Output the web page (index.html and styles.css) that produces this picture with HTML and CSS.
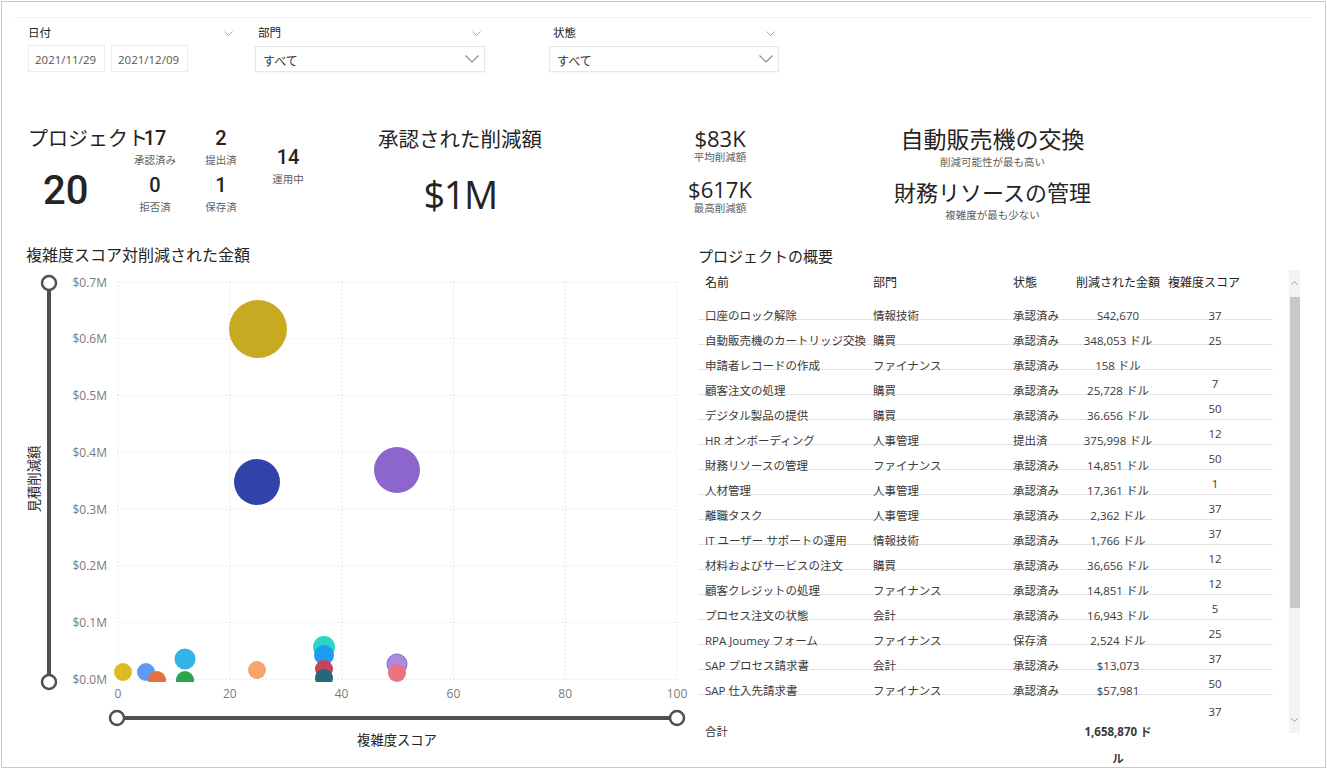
FILE: index.html
```html
<!DOCTYPE html>
<html lang="ja">
<head>
<meta charset="utf-8">
<title>プロジェクト ダッシュボード</title>
<link rel="stylesheet" href="styles.css">
</head>
<body>
<div class="frame">
  <div class="slicers">
    <div class="slicer s-date">
      <div class="s-head"><span>日付</span><svg class="chev-s" width="9" height="5" viewBox="0 0 9 5"><path d="M0.5 0.5 L4.5 4.5 L8.5 0.5" /></svg></div>
      <div class="dates"><div class="date">2021/11/29</div><div class="date">2021/12/09</div></div>
    </div>
    <div class="slicer s-dept">
      <div class="s-head"><span>部門</span><svg class="chev-s" width="9" height="5" viewBox="0 0 9 5"><path d="M0.5 0.5 L4.5 4.5 L8.5 0.5" /></svg></div>
      <div class="dropdown"><span>すべて</span><svg class="chev-l" width="14" height="8" viewBox="0 0 14 8"><path d="M0.5 0.5 L7 7 L13.5 0.5" /></svg></div>
    </div>
    <div class="slicer s-state">
      <div class="s-head"><span>状態</span><svg class="chev-s" width="9" height="5" viewBox="0 0 9 5"><path d="M0.5 0.5 L4.5 4.5 L8.5 0.5" /></svg></div>
      <div class="dropdown"><span>すべて</span><svg class="chev-l" width="14" height="8" viewBox="0 0 14 8"><path d="M0.5 0.5 L7 7 L13.5 0.5" /></svg></div>
    </div>
  </div>

  <div class="kpis">
    <div class="proj">
      <div class="proj-main">
        <div class="proj-title">プロジェクト</div>
        <div class="big20">20</div>
      </div>
      <div class="stats">
        <div class="stat"><div class="num">17</div><div class="lbl">承認済み</div></div>
        <div class="stat"><div class="num">2</div><div class="lbl">提出済</div></div>
        <div class="stat"><div class="num">0</div><div class="lbl">拒否済</div></div>
        <div class="stat"><div class="num">1</div><div class="lbl">保存済</div></div>
      </div>
      <div class="stat stat14"><div class="num">14</div><div class="lbl">運用中</div></div>
    </div>
    <div class="approved">
      <div class="ap-title">承認された削減額</div>
      <div class="ap-value">$1M</div>
    </div>
    <div class="avg">
      <div class="av-num">$83K</div>
      <div class="lbl">平均削減額</div>
      <div class="av-num second">$617K</div>
      <div class="lbl">最高削減額</div>
    </div>
    <div class="hl">
      <div class="hl-t1">自動販売機の交換</div>
      <div class="lbl hl-l">削減可能性が最も高い</div>
      <div class="hl-t2">財務リソースの管理</div>
      <div class="lbl hl-l">複雑度が最も少ない</div>
    </div>
  </div>

  <div class="bottom">
    <div class="chart">
      <div class="chart-title">複雑度スコア対削減された金額</div>
      <svg class="plot" width="675" height="490" viewBox="0 0 675 490">
        <defs><clipPath id="pc"><rect x="95" y="0" width="580" height="416"/></clipPath></defs>
        <g class="grid">
          <line x1="103" y1="16" x2="662" y2="16"/>
          <line x1="103" y1="72.8" x2="662" y2="72.8"/>
          <line x1="103" y1="129.5" x2="662" y2="129.5"/>
          <line x1="103" y1="186.3" x2="662" y2="186.3"/>
          <line x1="103" y1="243.1" x2="662" y2="243.1"/>
          <line x1="103" y1="299.9" x2="662" y2="299.9"/>
          <line x1="103" y1="356.6" x2="662" y2="356.6"/>
          <line x1="103" y1="413.4" x2="662" y2="413.4"/>
          <line x1="103" y1="16" x2="103" y2="414"/>
          <line x1="214.8" y1="16" x2="214.8" y2="414"/>
          <line x1="326.6" y1="16" x2="326.6" y2="414"/>
          <line x1="438.4" y1="16" x2="438.4" y2="414"/>
          <line x1="550.2" y1="16" x2="550.2" y2="414"/>
          <line x1="662" y1="16" x2="662" y2="414"/>
        </g>
        <g class="ylab">
          <text x="92" y="16">$0.7M</text>
          <text x="92" y="72.8">$0.6M</text>
          <text x="92" y="129.5">$0.5M</text>
          <text x="92" y="186.3">$0.4M</text>
          <text x="92" y="243.1">$0.3M</text>
          <text x="92" y="299.9">$0.2M</text>
          <text x="92" y="356.6">$0.1M</text>
          <text x="92" y="413.4">$0.0M</text>
        </g>
        <g class="xlab">
          <text x="103" y="427">0</text>
          <text x="214.8" y="427">20</text>
          <text x="326.6" y="427">40</text>
          <text x="438.4" y="427">60</text>
          <text x="550.2" y="427">80</text>
          <text x="662" y="427">100</text>
        </g>
        <g clip-path="url(#pc)">
          <circle cx="243" cy="63" r="29" fill="#c8aa22"/>
          <circle cx="242" cy="216" r="23" fill="#3142a8"/>
          <circle cx="382" cy="204" r="23" fill="#8d66cd"/>
          <circle cx="108" cy="406" r="9" fill="#dcbb22"/>
          <circle cx="131" cy="406" r="9" fill="#5c9cf4"/>
          <circle cx="142" cy="414" r="9" fill="#e5703f"/>
          <circle cx="170" cy="414" r="9" fill="#2aa54e"/>
          <circle cx="170" cy="393" r="10.5" fill="#33b3e6"/>
          <circle cx="242" cy="404" r="9" fill="#f7a56b"/>
          <circle cx="309" cy="381" r="11" fill="#2dd5c2"/>
          <circle cx="309" cy="389" r="10" fill="#1f9cf1"/>
          <circle cx="309" cy="403" r="9" fill="#c94356"/>
          <circle cx="309" cy="412" r="9" fill="#24687c"/>
          <circle cx="382" cy="398" r="10" fill="#ab8ce3" stroke="#8a63c4" stroke-width="1"/>
          <circle cx="382" cy="407" r="9" fill="#e9737f"/>
        </g>
        <g class="slider">
          <line x1="34" y1="17" x2="34" y2="416"/>
          <circle cx="34" cy="17" r="7"/>
          <circle cx="34" cy="416" r="7"/>
          <line x1="102" y1="452" x2="662" y2="452"/>
          <circle cx="102" cy="452" r="7"/>
          <circle cx="662" cy="452" r="7"/>
        </g>
        <text class="axis-title" x="382" y="474">複雑度スコア</text>
        <text class="axis-title" transform="translate(19,213) rotate(-90)">見積削減額</text>
      </svg>
    </div>

    <div class="table-sec">
      <div class="table-title">プロジェクトの概要</div>
      <div class="tbl-wrap">
        <div class="tbl">
          <div class="tr thead"><div>名前</div><div>部門</div><div>状態</div><div class="c">削減された金額</div><div class="sc-h">複雑度スコア</div><div></div></div>
          <div class="tr"><div>口座のロック解除</div><div>情報技術</div><div>承認済み</div><div class="c">S42,670</div><div class="c">37</div><div></div></div>
          <div class="tr"><div>自動販売機のカートリッジ交換</div><div>購買</div><div>承認済み</div><div class="c">348,053 ドル</div><div class="c">25</div><div></div></div>
          <div class="tr"><div>申請者レコードの作成</div><div>ファイナンス</div><div>承認済み</div><div class="c">158 ドル</div><div class="c"></div><div></div></div>
          <div class="tr"><div>顧客注文の処理</div><div>購買</div><div>承認済み</div><div class="c">25,728 ドル</div><div class="c up">7</div><div></div></div>
          <div class="tr"><div>デジタル製品の提供</div><div>購買</div><div>承認済み</div><div class="c">36.656 ドル</div><div class="c up">50</div><div></div></div>
          <div class="tr"><div>HR オンボーディング</div><div>人事管理</div><div>提出済</div><div class="c">375,998 ドル</div><div class="c up">12</div><div></div></div>
          <div class="tr"><div>財務リソースの管理</div><div>ファイナンス</div><div>承認済み</div><div class="c">14,851 ドル</div><div class="c up">50</div><div></div></div>
          <div class="tr"><div>人材管理</div><div>人事管理</div><div>承認済み</div><div class="c">17,361 ドル</div><div class="c up">1</div><div></div></div>
          <div class="tr"><div>離職タスク</div><div>人事管理</div><div>承認済み</div><div class="c">2,362 ドル</div><div class="c up">37</div><div></div></div>
          <div class="tr"><div>IT ユーザー サポートの運用</div><div>情報技術</div><div>承認済み</div><div class="c">1,766 ドル</div><div class="c up">37</div><div></div></div>
          <div class="tr"><div>材料およびサービスの注文</div><div>購買</div><div>承認済み</div><div class="c">36,656 ドル</div><div class="c up">12</div><div></div></div>
          <div class="tr"><div>顧客クレジットの処理</div><div>ファイナンス</div><div>承認済み</div><div class="c">14,851 ドル</div><div class="c up">12</div><div></div></div>
          <div class="tr"><div>プロセス注文の状態</div><div>会計</div><div>承認済み</div><div class="c">16,943 ドル</div><div class="c up">5</div><div></div></div>
          <div class="tr"><div>RPA Joumey フォーム</div><div>ファイナンス</div><div>保存済</div><div class="c">2,524 ドル</div><div class="c up">25</div><div></div></div>
          <div class="tr"><div>SAP プロセス請求書</div><div>会計</div><div>承認済み</div><div class="c">$13,073</div><div class="c up">37</div><div></div></div>
          <div class="tr"><div>SAP 仕入先請求書</div><div>ファイナンス</div><div>承認済み</div><div class="c">$57,981</div><div class="c up">50</div><div></div></div>
          <div class="tr noline"><div></div><div></div><div></div><div class="c"></div><div class="c up2">37</div><div></div></div>
          <div class="tr total"><div class="tot-l">合計</div><div></div><div></div><div class="c tot-v"><span>1,658,870 ド</span><span>ル</span></div><div></div><div></div></div>
        </div>
        <div class="scroll">
          <div class="sb-btn"><svg width="7" height="4" viewBox="0 0 7 4"><path d="M0.5 3.5 L3.5 0.5 L6.5 3.5"/></svg></div>
          <div class="sb-thumb"></div>
          <div class="sb-space"></div>
          <div class="sb-btn"><svg width="7" height="4" viewBox="0 0 7 4"><path d="M0.5 0.5 L3.5 3.5 L6.5 0.5"/></svg></div>
        </div>
      </div>
    </div>
  </div>
</div>
</body>
</html>
```

FILE: styles.css
```css
html, body {
  margin: 0;
  overflow: hidden;
}
body {
  padding: 1px;
  background: #fff;
  font-family: "Open Sans", "Noto Sans CJK JP", sans-serif;
  color: #252423;
}
.frame {
  width: 1325px;
  height: 767px;
  box-sizing: border-box;
  border: 1px solid #c8c8c8;
}

/* slicers */
.slicers {
  margin: 15px 15px 0 13px;
  border-top: 1px solid #f0f0f0;
  padding: 7px 0 0 13px;
  display: flex;
  height: 47px;
}
.slicer { display: flex; flex-direction: column; }
.s-head {
  display: flex;
  justify-content: space-between;
  align-items: center;
  height: 16px;
  font-size: 11.5px;
  line-height: 16px;
  color: #252423;
}
.chev-s path { fill: none; stroke: #a8a8a8; stroke-width: 1; }
.chev-l path { fill: none; stroke: #8a8a8a; stroke-width: 1.2; }
.s-date { width: 208px; }
.s-date .s-head { padding-right: 3px; }
.s-dept { width: 230px; margin-left: 19px; }
.s-dept .s-head { padding: 0 4px 0 3px; }
.s-state { width: 230px; margin-left: 64px; }
.s-state .s-head { padding: 0 4px 0 4px; }
.dates { display: flex; margin-top: 4px; }
.date {
  width: 77px;
  height: 27px;
  box-sizing: border-box;
  border: 1px solid #ececec;
  padding: 1px 0 0 6px;
  font-size: 11.5px;
  line-height: 25px;
  color: #555;
}
.date + .date { margin-left: 6px; }
.dropdown {
  margin-top: 5px;
  height: 27px;
  box-sizing: border-box;
  border: 1px solid #e8e8e8;
  box-shadow: 0 1px 2px rgba(0,0,0,0.05);
  display: flex;
  align-items: center;
  justify-content: space-between;
  padding: 0 5px 0 7px;
  font-size: 12px;
  color: #333;
}
.dropdown span { padding-top: 4px; }

/* KPIs */
.kpis {
  display: flex;
  align-items: flex-start;
  padding-left: 26px;
  margin-top: 53px;
  height: 119px;
}
.lbl {
  font-size: 10.5px;
  line-height: 14px;
  color: #605e5c;
  white-space: nowrap;
}
.proj { display: flex; width: 292px; align-items: flex-start; }
.proj-main { width: 102px; padding-top: 2px; }
.proj-title {
  font-size: 20px;
  line-height: 24px;
  white-space: nowrap;
}
.big20 {
  font-family: Roboto, sans-serif;
  font-weight: 500;
  font-size: 40px;
  line-height: 44px;
  margin: 18px 0 0 15px;
}
.stats {
  display: grid;
  grid-template-columns: 50px 50px;
  column-gap: 16px;
  row-gap: 7px;
  margin-top: 2px;
}
.stat { text-align: center; width: 50px; }
.num {
  font-family: Roboto, sans-serif;
  font-weight: 500;
  font-size: 20px;
  line-height: 22px;
}
.stat .lbl { margin-top: 4px; }
.stat14 { margin: 21px 0 0 17px; }

.approved { margin-left: 40px; width: 200px; text-align: center; padding-top: 2px; }
.ap-title { font-size: 20.5px; line-height: 24px; white-space: nowrap; }
.ap-value {
  font-size: 38px;
  line-height: 44px;
  letter-spacing: -1.5px;
  margin-top: 21px;
}

.avg { margin-left: 110px; width: 100px; text-align: center; padding-top: 1px; }
.av-num { font-size: 22px; line-height: 24px; }
.av-num.second { margin-top: 13px; }

.hl { margin-left: 110px; width: 225px; text-align: center; }
.hl-t1 { font-size: 23px; line-height: 28px; white-space: nowrap; }
.hl-t2 { font-size: 22px; line-height: 28px; white-space: nowrap; margin-top: 9px; }
.hl-l { margin-top: 2px; }

/* bottom */
.bottom { display: flex; padding-left: 13px; }
.chart { width: 675px; }
.chart-title {
  font-size: 16px;
  line-height: 22px;
  padding-left: 11px;
  white-space: nowrap;
}
.plot { display: block; font-family: "Open Sans", "Noto Sans CJK JP", sans-serif; }
.grid line { stroke: #d6d6d6; stroke-width: 1; stroke-dasharray: 1 3; }
.ylab text { font-size: 12px; fill: #7a7a7a; text-anchor: end; dominant-baseline: central; }
.xlab text { font-size: 12px; fill: #7a7a7a; text-anchor: middle; dominant-baseline: central; }
.slider line { stroke: #505050; stroke-width: 4; }
.slider circle { fill: #fff; stroke: #505050; stroke-width: 2.5; }
.axis-title { font-size: 13.3px; fill: #252423; text-anchor: middle; dominant-baseline: central; }

.table-sec { margin-left: 8px; width: 602px; }
.table-title {
  margin-top: 1px;
  font-size: 15px;
  line-height: 22px;
}
.tbl-wrap { display: flex; margin-top: 3px; }
.tbl { width: 575px; }
.tr {
  display: grid;
  grid-template-columns: 175px 140px 61px 88px 106px 1fr;
  height: 25px;
  box-sizing: border-box;
  border-bottom: 1px solid #e4e4e4;
  padding-top: 13px;
  font-size: 11.5px;
  line-height: 16px;
  color: #3b3a39;
  white-space: nowrap;
}
.tr > div:first-child { padding-left: 7px; }
.tr .c { text-align: center; }
.tr .up { transform: translateY(-7px); }
.tr .up2 { transform: translateY(-4px); }
.tr.thead {
  padding-top: 5px;
  border-bottom: none;
  font-size: 12px;
  color: #252423;
}
.tr.thead .sc-h { padding-left: 6px; }
.tr.noline { border-bottom: none; }
.tr.total {
  border-bottom: none;
  padding-top: 4px;
  height: auto;
  align-items: start;
}
.tot-v {
  display: flex;
  flex-direction: column;
  align-items: center;
  font-weight: 700;
  line-height: 27px;
  margin-top: -6px;
}

.scroll {
  margin-left: 16px;
  width: 11px;
  height: 463px;
  background: #f3f3f3;
  display: flex;
  flex-direction: column;
}
.sb-btn {
  height: 26px;
  display: flex;
  align-items: center;
  justify-content: center;
}
.sb-btn path { fill: none; stroke: #9a9a9a; stroke-width: 1; }
.sb-thumb { height: 311px; background: #c8c8c8; margin: 1px 0 0 1px; }
.sb-space { flex: 1; }
```
